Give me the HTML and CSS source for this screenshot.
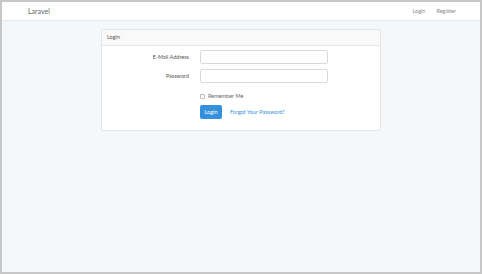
FILE: index.html
```html
<!DOCTYPE html>
<html lang="en">
<head>
    <meta charset="UTF-8">
    <meta name="viewport" content="width=device-width, initial-scale=1.0">
    <title>Laravel</title>
    <link rel="stylesheet" href="styles.css">
</head>
<body>
    <div id="app">
        <nav class="navbar">
            <a class="brand" href="#">Laravel</a>
            <div class="nav-links">
                <a href="#">Login</a>
                <a href="#">Register</a>
            </div>
        </nav>

        <main class="content">
            <div class="card">
                <div class="card-header">Login</div>
                <div class="card-body">
                    <form action="">
                        <div class="form-row">
                            <label for="email">E-Mail Address</label>
                            <input type="email" id="email" name="email">
                        </div>
                        <div class="form-row">
                            <label for="password">Password</label>
                            <input type="password" id="password" name="password">
                        </div>
                        <div class="form-row check-row">
                            <span></span>
                            <div class="check">
                                <span class="box"></span>
                                <span>Remember Me</span>
                            </div>
                        </div>
                        <div class="form-row btn-row">
                            <span></span>
                            <div class="actions">
                                <button class="btn">Login</button>
                                <a class="link" href="#">Forgot Your Password?</a>
                            </div>
                        </div>
                    </form>
                </div>
            </div>
        </main>
    </div>
</body>
</html>
```

FILE: styles.css
```css
html, body {
    margin: 0;
    height: 100%;
}
body {
    font-family: Lato, "Open Sans", sans-serif;
    color: #212529;
    box-sizing: border-box;
    border: 2px solid #c7c7c7;
    background: #f5f8fa;
}
#app {
    height: 100%;
}

/* top bar */
.navbar {
    display: flex;
    align-items: center;
    justify-content: space-between;
    height: 18px;
    padding: 0 24px 0 26px;
    background: #fff;
    box-shadow: 0 1px 1px rgba(0,0,0,0.06);
}
.brand {
    font-size: 7px;
    color: #666;
    text-decoration: none;
}
.nav-links {
    display: flex;
    gap: 11px;
}
.nav-links a {
    font-size: 5.5px;
    color: #8a8a8a;
    text-decoration: none;
}

.content {
    padding-top: 9px;
    display: flex;
    justify-content: center;
}

/* card */
.card {
    width: 278px;
    background: #fff;
    border: 1px solid #e4e4e4;
    border-radius: 2px;
}
.card-header {
    height: 15px;
    line-height: 15px;
    padding: 0 5px;
    font-size: 5.5px;
    color: #555;
    background: #f9f9f9;
    border-bottom: 1px solid #e6e6e6;
}
.card-body {
    padding: 4px 0 11px;
}

.form-row {
    display: grid;
    grid-template-columns: 87px 128px;
    column-gap: 11px;
    align-items: center;
    margin-bottom: 5px;
    font-size: 5.5px;
    color: #555;
}
.form-row label {
    text-align: right;
}
.form-row input {
    box-sizing: border-box;
    width: 128px;
    height: 14px;
    margin: 0;
    border: 1px solid #d6dadf;
    border-radius: 2px;
    background: #fff;
}
.check-row {
    margin-top: 9px;
    height: 8px;
}
.check {
    display: flex;
    align-items: center;
    gap: 3px;
    color: #666;
}
.box {
    width: 3px;
    height: 3px;
    border: 1px solid #bbb;
    border-radius: 1px;
}
.btn-row {
    margin-bottom: 0;
}
.actions {
    display: flex;
    align-items: center;
    gap: 8px;
}
.btn {
    width: 22px;
    height: 14px;
    padding: 0;
    border: 0;
    border-radius: 2px;
    background: #3490dc;
    color: #fff;
    font-family: inherit;
    font-size: 5.5px;
}
.link {
    color: #3490dc;
    text-decoration: none;
}
```
